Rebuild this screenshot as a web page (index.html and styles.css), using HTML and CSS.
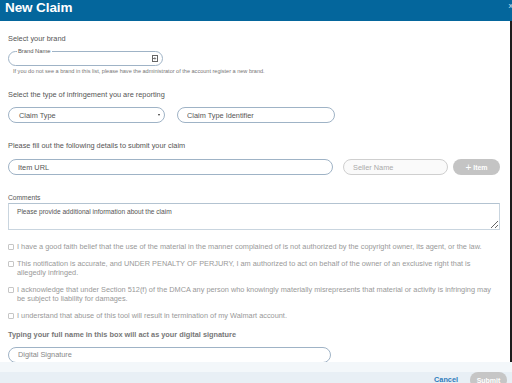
FILE: index.html
```html
<!DOCTYPE html>
<html lang="en">
<head>
    <meta charset="UTF-8">
    <meta name="viewport" content="width=device-width, initial-scale=1.0">
    <title>New Claim</title>
    <link rel="stylesheet" href="styles.css">
</head>
<body>
    <div class="modal">
        <div class="modal-header">
            <h1>New Claim</h1>
            <span class="close">x</span>
        </div>

        <form class="modal-body" id="claimForm">
            <p class="label">Select your brand</p>
            <fieldset class="brand-field">
                <legend>Brand Name</legend>
                <input type="text" class="brand-input">
                <svg class="brand-icon" width="6" height="7" viewBox="0 0 6 7">
                    <rect x="0.5" y="0.5" width="5" height="6" fill="none" stroke="#666" stroke-width="1"/>
                    <path d="M1 3.5h2.5M2.6 2.3l1.2 1.2-1.2 1.2" fill="none" stroke="#666" stroke-width="0.9"/>
                </svg>
            </fieldset>
            <p class="hint">If you do not see a brand in this list, please have the administrator of the account register a new brand.</p>

            <p class="label type-label">Select the type of infringement you are reporting</p>
            <div class="row claim-row">
                <div class="pill claim-type">
                    <span>Claim Type</span>
                    <span class="caret"></span>
                </div>
                <input type="text" class="pill claim-id" placeholder="Claim Type Identifier">
            </div>

            <p class="label details-label">Please fill out the following details to submit your claim</p>
            <div class="row item-row">
                <input type="text" class="pill item-url" placeholder="Item URL">
                <input type="text" class="pill seller-name" placeholder="Seller Name" disabled>
                <button type="button" class="add-item"><span class="plus">+</span> Item</button>
            </div>

            <p class="comments-label">Comments</p>
            <textarea class="comments" placeholder="Please provide additional information about the claim"></textarea>

            <div class="checks">
                <label class="check"><span class="box"></span><span>I have a good faith belief that the use of the material in the manner complained of is not authorized by the copyright owner, its agent, or the law.</span></label>
                <label class="check"><span class="box"></span><span>This notification is accurate, and UNDER PENALTY OF PERJURY, I am authorized to act on behalf of the owner of an exclusive right that is<br>allegedly infringed.</span></label>
                <label class="check"><span class="box"></span><span>I acknowledge that under Section 512(f) of the DMCA any person who knowingly materially misrepresents that material or activity is infringing may<br>be subject to liability for damages.</span></label>
                <label class="check"><span class="box"></span><span>I understand that abuse of this tool will result in termination of my Walmart account.</span></label>
            </div>

            <p class="signature-label">Typing your full name in this box will act as your digital signature</p>
            <input type="text" class="pill signature" placeholder="Digital Signature">
        </form>

        <div class="modal-footer">
            <a href="#" class="cancel">Cancel</a>
            <button type="button" class="submit" disabled>Submit</button>
        </div>
    </div>
</body>
</html>
```

FILE: styles.css
```css
* {
    box-sizing: border-box;
}

body {
    margin: 0;
    font-family: "Liberation Sans", Arial, sans-serif;
    background-color: #fff;
    overflow: hidden;
}

.modal {
    width: 512px;
    height: 383px;
    display: flex;
    flex-direction: column;
}

.modal-header {
    height: 21px;
    flex-shrink: 0;
    display: flex;
    justify-content: space-between;
    padding-left: 5px;
    background-color: #04669c;
}
.modal-header h1 {
    margin: 0;
    font-size: 13.5px;
    line-height: 15px;
    font-weight: bold;
    color: #fff;
    letter-spacing: -0.1px;
}
.close {
    font-size: 8px;
    line-height: 12px;
    font-weight: bold;
    color: #a9c7dd;
    margin-right: -1px;
}

.modal-body {
    flex: 1;
    overflow: hidden;
    padding: 13px 10px 0 8px;
    border-right: 2px solid #1d1d1d;
}

p {
    margin: 0;
}
.label {
    font-size: 7.35px;
    line-height: 9px;
    color: #555;
}
.type-label {
    margin-top: 15px;
}
.details-label {
    margin-top: 18px;
}

/* brand picker */
.brand-field {
    width: 155px;
    min-width: 0;
    margin: 5px 0 0;
    padding: 0 4px 0 8px;
    border: 1px solid #9fb3c6;
    border-radius: 9px;
    display: flex;
    align-items: center;
}
.brand-field legend {
    padding: 0 1px;
    font-size: 5.8px;
    line-height: 6px;
    color: #555;
}
.brand-input {
    flex: 1;
    width: 0;
    min-width: 0;
    height: 11px;
    border: none;
    padding: 0;
    outline: none;
    background: transparent;
}
.brand-icon {
    display: block;
    margin-top: -2px;
}
.hint {
    margin: 1.5px 0 0 5px;
    font-size: 5.55px;
    line-height: 7px;
    color: #777;
}

/* pills */
.row {
    display: flex;
    align-items: center;
}
.claim-row {
    gap: 12px;
    margin-top: 8.5px;
}
.item-row {
    gap: 10px;
    margin-top: 9px;
}
.pill {
    height: 16px;
    padding: 0 9px;
    border: 1px solid #9fb3c6;
    border-radius: 8px;
    font-family: inherit;
    font-size: 7.35px;
    color: #555;
    background-color: #fff;
    outline: none;
}
.pill::placeholder {
    color: #555;
}
.claim-type {
    width: 157px;
    display: flex;
    align-items: center;
    justify-content: space-between;
    padding-left: 10px;
    padding-right: 4px;
}
.caret {
    width: 0;
    height: 0;
    border-left: 1.5px solid transparent;
    border-right: 1.5px solid transparent;
    border-top: 2px solid #333;
}
.claim-id {
    width: 158px;
}
.item-url {
    width: 325px;
}
.seller-name {
    width: 105px;
    border-color: #cfcfcf;
    background-color: #fafafa;
}
.seller-name::placeholder {
    color: #aaa;
}
.add-item {
    width: 47px;
    height: 16px;
    margin-left: -5px;
    padding: 0;
    border: none;
    border-radius: 8px;
    background-color: #c4c4c4;
    color: #fff;
    font-family: inherit;
    font-size: 7px;
    font-weight: bold;
}
.add-item .plus {
    font-weight: normal;
    font-size: 10px;
    vertical-align: -1px;
}

/* comments */
.comments-label {
    margin-top: 19px;
    font-size: 6.7px;
    line-height: 8px;
    color: #555;
}
.comments {
    display: block;
    width: 492px;
    height: 27px;
    margin-top: 1px;
    padding: 4px 8px;
    border: 1px solid #c9d5df;
    border-top-color: #b3c3d1;
    border-radius: 0;
    font-family: inherit;
    font-size: 6.6px;
    color: #555;
    resize: vertical;
    outline: none;
}
.comments::placeholder {
    color: #555;
}

/* agreements */
.checks {
    margin-top: 12.3px;
    display: flex;
    flex-direction: column;
    gap: 7px;
}
.check {
    display: flex;
    gap: 3px;
    font-size: 7.35px;
    line-height: 9.5px;
    color: #999;
}
.check .box {
    flex-shrink: 0;
    width: 6px;
    height: 6px;
    margin-top: 2px;
    border: 1px solid #c6c6c6;
    border-radius: 1px;
}

/* signature */
.signature-label {
    margin-top: 9.5px;
    font-size: 7.35px;
    line-height: 9px;
    font-weight: bold;
    color: #777;
}
.signature {
    display: block;
    width: 323px;
    margin-top: 8px;
}
.signature::placeholder {
    color: #888;
}

/* footer */
.modal-footer {
    height: 21px;
    flex-shrink: 0;
    display: flex;
    justify-content: flex-end;
    align-items: flex-start;
    padding: 10px 5px 0 0;
    background: linear-gradient(#f3f7fa 0, #f3f7fa 10px, #e8eff5 10px);
}
.cancel {
    margin-right: 12px;
    font-size: 7.3px;
    line-height: 16px;
    font-weight: bold;
    color: #2f7cbc;
    text-decoration: none;
}
.submit {
    width: 37px;
    height: 16px;
    padding: 0;
    border: none;
    border-radius: 8px;
    background-color: #c6c6c6;
    color: #fff;
    font-family: inherit;
    font-size: 7px;
    font-weight: bold;
}
```
